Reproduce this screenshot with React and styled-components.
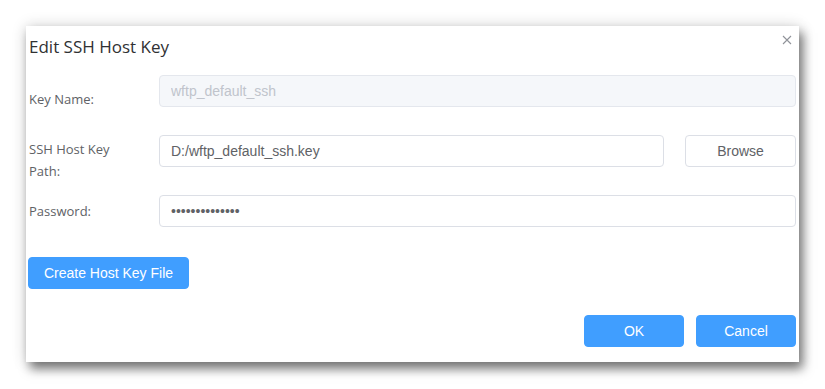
import React from "react";
import styled, { createGlobalStyle } from "styled-components";

const Global = createGlobalStyle`
  html, body { margin: 0; padding: 0; background: #ffffff; }
  body { font-family: "Liberation Sans", Arial, sans-serif; }
  * { box-sizing: border-box; }
`;

const Page = styled.div`
  width: 825px;
  height: 389px;
  padding: 26px 0 0 26px;
  background: #ffffff;
`;

const Dialog = styled.div`
  width: 773px;
  height: 336px;
  background: #ffffff;
  padding: 0 3px 0 2px;
  display: flex;
  flex-direction: column;
  box-shadow: 4px 7px 10px rgba(0, 0, 0, 0.5), 0 0 14px rgba(0, 0, 0, 0.16);
`;

const Header = styled.div`
  flex-shrink: 0;
  height: 49px;
  padding-top: 8px;
  display: flex;
  justify-content: space-between;
  align-items: flex-start;
`;

const Title = styled.div`
  font-family: "Open Sans", "Noto Sans", sans-serif;
  font-size: 17px;
  line-height: 26px;
  color: #303133;
  padding-left: 1px;
`;

const Close = styled.button`
  border: 0;
  background: transparent;
  padding: 0;
  margin: 1px 4px 0 0;
  width: 10px;
  height: 10px;
  display: flex;
  cursor: pointer;
`;

const Form = styled.div`
  flex-shrink: 0;
  display: flex;
  flex-direction: column;
  gap: 28px;
`;

const Row = styled.div`
  height: 32px;
  display: flex;
  align-items: flex-start;
`;

const Label = styled.label`
  flex: 0 0 131px;
  font-family: "Open Sans", "Noto Sans", sans-serif;
  font-size: 13px;
  line-height: 22px;
  color: #606266;
  padding-top: ${(p) => p.$offset}px;
  padding-left: 1px;
`;

const Input = styled.input`
  flex: 1;
  min-width: 0;
  height: 32px;
  border: 1px solid ${(p) => (p.disabled ? "#e4e7ed" : "#dcdfe6")};
  background: ${(p) => (p.disabled ? "#f5f7fa" : "#ffffff")};
  color: ${(p) => (p.disabled ? "#c0c4cc" : "#606266")};
  -webkit-text-fill-color: ${(p) => (p.disabled ? "#c0c4cc" : "#606266")};
  border-radius: 4px;
  padding: 0 11px;
  font-family: "Liberation Sans", Arial, sans-serif;
  font-size: 14px;
  outline: none;
`;

const Button = styled.button`
  flex-shrink: 0;
  height: 32px;
  width: ${(p) => p.$w}px;
  margin-left: ${(p) => p.$ml || 0}px;
  border-radius: 4px;
  font-family: "Liberation Sans", Arial, sans-serif;
  font-size: 14px;
  cursor: pointer;
  padding: 0;
  border: 1px solid ${(p) => (p.$primary ? "#409eff" : "#dcdfe6")};
  background: ${(p) => (p.$primary ? "#409eff" : "#ffffff")};
  color: ${(p) => (p.$primary ? "#ffffff" : "#606266")};
`;

const CreateWrap = styled.div`
  flex-shrink: 0;
  margin-top: 30px;
`;

const Footer = styled.div`
  flex-shrink: 0;
  margin-top: 26px;
  display: flex;
  justify-content: flex-end;
  gap: 12px;
`;

export default function App() {
  return (
    <>
      <Global />
      <Page>
        <Dialog>
          <Header>
            <Title>Edit SSH Host Key</Title>
            <Close aria-label="Close">
              <svg width="10" height="10" viewBox="0 0 10 10">
                <path d="M1 1L9 9M9 1L1 9" stroke="#909399" strokeWidth="1.1" fill="none" />
              </svg>
            </Close>
          </Header>
          <Form>
            <Row>
              <Label $offset={13}>Key Name:</Label>
              <Input disabled value="wftp_default_ssh" readOnly />
            </Row>
            <Row>
              <Label $offset={3}>
                SSH Host Key
                <br />
                Path:
              </Label>
              <Input value="D:/wftp_default_ssh.key" readOnly />
              <Button $w={111} $ml={21}>Browse</Button>
            </Row>
            <Row>
              <Label $offset={5}>Password:</Label>
              <Input type="password" value="abcdefghijklmn" readOnly />
            </Row>
          </Form>
          <CreateWrap>
            <Button $primary $w={161}>Create Host Key File</Button>
          </CreateWrap>
          <Footer>
            <Button $primary $w={100}>OK</Button>
            <Button $primary $w={100}>Cancel</Button>
          </Footer>
        </Dialog>
      </Page>
    </>
  );
}
